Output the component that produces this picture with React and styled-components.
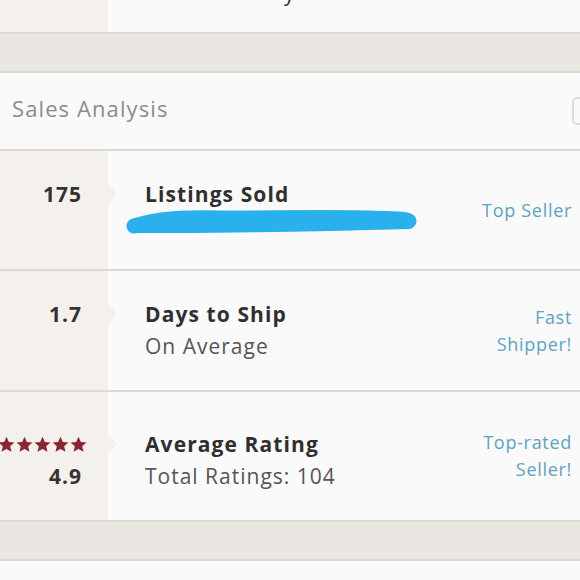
import React from 'react'
import styled, { createGlobalStyle } from 'styled-components'

const GlobalStyle = createGlobalStyle`
  html, body {
    margin: 0;
    padding: 0;
    background: #fafafa;
    font-family: "Open Sans", Lato, sans-serif;
    overflow: hidden;
  }
`

const beige = '#f4f1ec'
const line = '#dcd9d5'

const Page = styled.div`
  width: 580px;
  height: 580px;
  overflow: hidden;
  background: #fafafa;
`

const TopCard = styled.div`
  display: grid;
  grid-template-columns: 108px 1fr;
  height: 32px;
  border-bottom: 2px solid ${line};

  .top__left {
    background: ${beige};
  }

  .top__right {
    position: relative;
    overflow: hidden;
  }

  .top__tail {
    position: absolute;
    left: 176px;
    top: -21px;
    font-size: 21px;
    color: #333;
  }
`

const Band = styled.div`
  height: 37px;
  background: #e9e6e2;
  border-bottom: 2px solid ${line};
`

const Header = styled.div`
  display: flex;
  align-items: center;
  justify-content: space-between;
  height: 78px;
  padding: 0 0 7px 12px;
  box-sizing: border-box;
  border-bottom: 2px solid ${line};

  .header__title {
    font-size: 22px;
    color: #8f8b86;
    letter-spacing: 1.1px;
  }

  .header__button {
    width: 40px;
    height: 24px;
    margin: 7px -36px 0 0;
    border: 2px solid #dedbd7;
    border-radius: 5px;
  }
`

const Row = styled.div`
  display: grid;
  grid-template-columns: 108px 1fr auto;
  height: ${p => p.$height}px;
  border-bottom: 2px solid ${line};
`

const Left = styled.div`
  position: relative;
  display: flex;
  flex-direction: column;
  align-items: flex-end;
  padding: ${p => p.$top}px 26px 0 0;
  background: ${beige};

  &::after {
    content: '';
    position: absolute;
    right: -9px;
    top: ${p => p.$top + 6}px;
    border-top: 10px solid transparent;
    border-bottom: 10px solid transparent;
    border-left: 9px solid ${beige};
  }
`

const Number = styled.div`
  font-size: 21px;
  font-weight: 700;
  line-height: 32px;
  letter-spacing: 1px;
  color: #333;
`

const Stars = styled.div`
  display: flex;
  gap: 1px;
  height: 32px;
  align-items: center;
  margin-right: -5px;
`

const Middle = styled.div`
  padding: ${p => p.$top}px 0 0 37px;
`

const Title = styled.div`
  font-size: 21px;
  font-weight: 700;
  line-height: 32px;
  letter-spacing: 1.1px;
  color: #2f2f2f;
`

const Sub = styled.div`
  font-size: 21px;
  line-height: 32px;
  letter-spacing: 1px;
  color: #555;
`

const Scribble = styled.svg`
  display: block;
  margin: -2px 0 0 -20px;
`

const Badge = styled.div`
  align-self: center;
  padding-right: 8px;
  text-align: right;
  font-size: 18px;
  line-height: 27px;
  letter-spacing: 0.7px;
  color: #5ba3c6;
`

function Star() {
  return (
    <svg width="17" height="17" viewBox="0 0 24 24">
      <path
        d="M12 1l3.3 7.3 7.9.8-6 5.3 1.8 7.8L12 18.2l-7 4 1.8-7.8-6-5.3 7.9-.8z"
        fill="#8a2634"
      />
    </svg>
  )
}

export default function App() {
  return (
    <Page>
      <GlobalStyle />
      <TopCard>
        <div className="top__left" />
        <div className="top__right">
          <span className="top__tail">y</span>
        </div>
      </TopCard>
      <Band />
      <Header>
        <div className="header__title">Sales Analysis</div>
        <div className="header__button" />
      </Header>

      <Row $height={118}>
        <Left $top={27}>
          <Number>175</Number>
        </Left>
        <Middle $top={27}>
          <Title>Listings Sold</Title>
          <Scribble width="296" height="28" viewBox="0 0 296 28">
            <path
              d="M9 18 C 40 8, 70 10, 110 10 S 200 9, 240 10 S 282 11, 284 13"
              stroke="#29b1ee"
              strokeWidth="15"
              strokeLinecap="round"
              fill="none"
            />
            <path
              d="M8 20 C 60 20, 140 20, 284 16"
              stroke="#29b1ee"
              strokeWidth="10"
              strokeLinecap="round"
              fill="none"
            />
          </Scribble>
        </Middle>
        <Badge>Top Seller</Badge>
      </Row>

      <Row $height={119}>
        <Left $top={27}>
          <Number>1.7</Number>
        </Left>
        <Middle $top={27}>
          <Title>Days to Ship</Title>
          <Sub>On Average</Sub>
        </Middle>
        <Badge>Fast<br />Shipper!</Badge>
      </Row>

      <Row $height={128}>
        <Left $top={36}>
          <Stars>
            <Star /><Star /><Star /><Star /><Star />
          </Stars>
          <Number>4.9</Number>
        </Left>
        <Middle $top={36}>
          <Title>Average Rating</Title>
          <Sub>Total Ratings: 104</Sub>
        </Middle>
        <Badge>Top-rated<br />Seller!</Badge>
      </Row>

      <Band />
    </Page>
  )
}
